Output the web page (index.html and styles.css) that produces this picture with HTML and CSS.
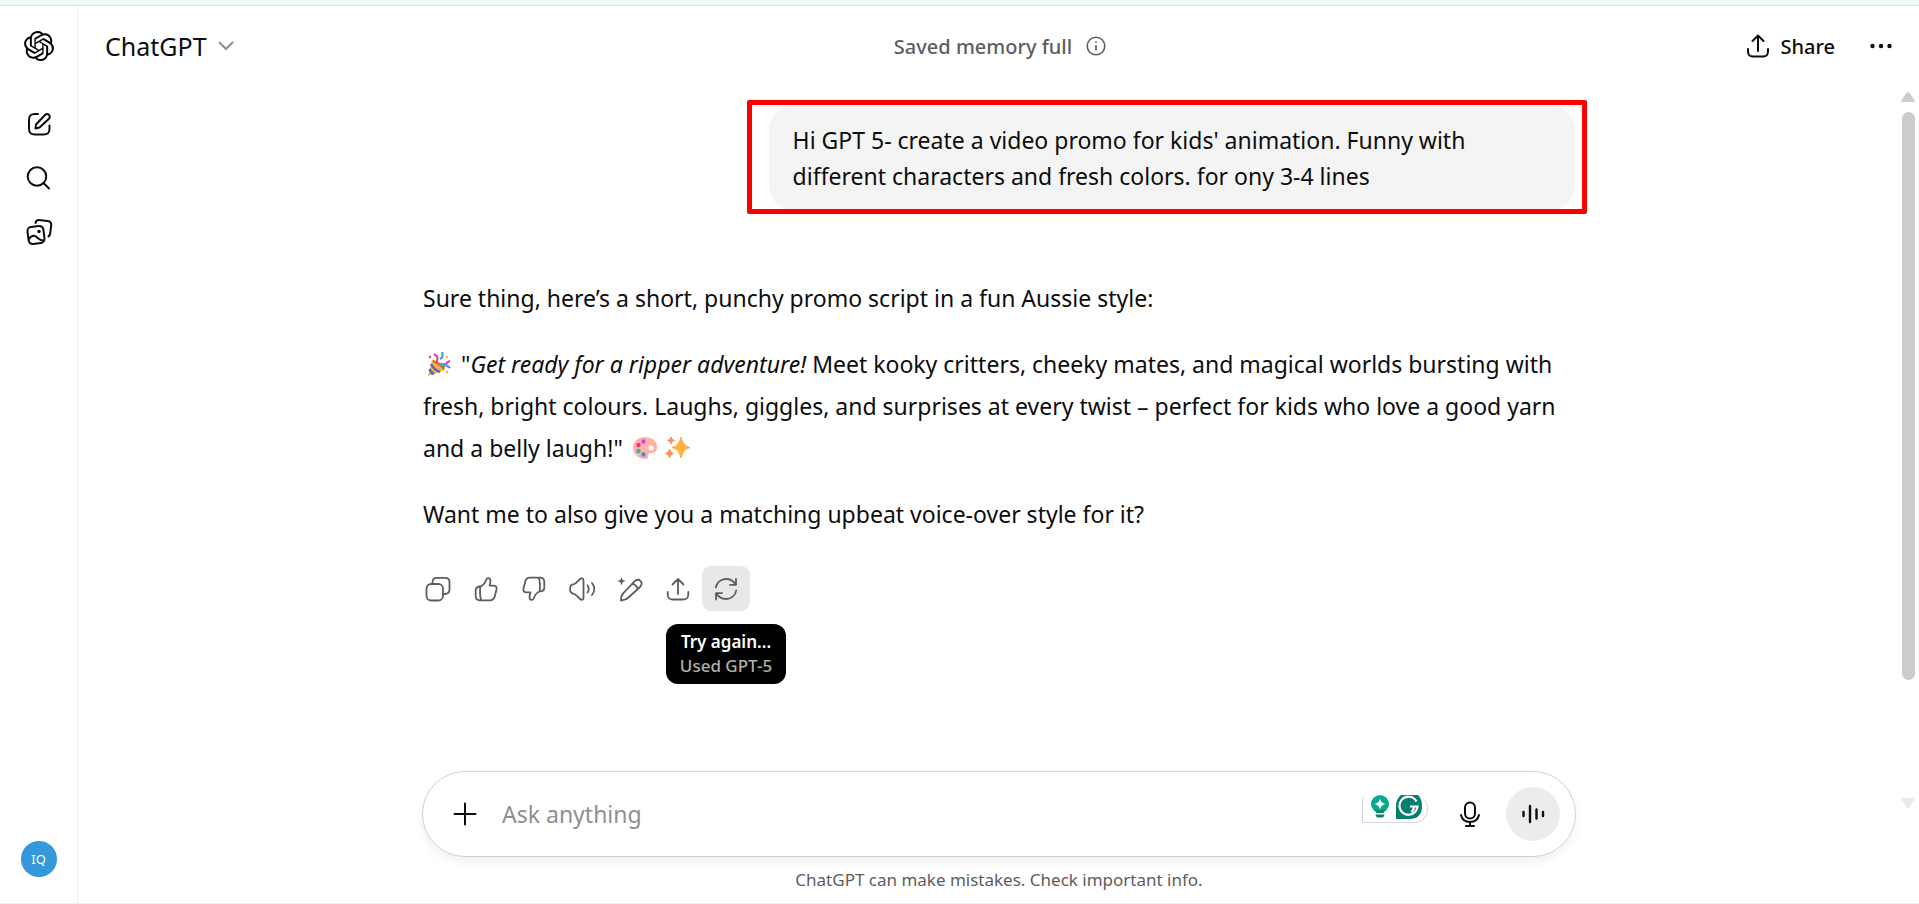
FILE: index.html
```html
<!DOCTYPE html>
<html lang="en">
<head>
    <meta charset="UTF-8">
    <title>ChatGPT</title>
    <link rel="stylesheet" href="styles.css">
</head>
<body>
<div class="strip"></div>
<div class="app">
    <nav class="sidebar">
        <a class="logo" href="#" aria-label="Home">
            <svg viewBox="0 0 24 24"><path d="M22.2819 9.8211a5.9847 5.9847 0 0 0-.5157-4.9108 6.0462 6.0462 0 0 0-6.5098-2.9A6.0651 6.0651 0 0 0 4.9807 4.1818a5.9847 5.9847 0 0 0-3.9977 2.9 6.0462 6.0462 0 0 0 .7427 7.0966 5.98 5.98 0 0 0 .511 4.9107 6.051 6.051 0 0 0 6.5146 2.9001A5.9847 5.9847 0 0 0 13.2599 24a6.0557 6.0557 0 0 0 5.7718-4.2058 5.9894 5.9894 0 0 0 3.9977-2.9001 6.0557 6.0557 0 0 0-.7475-7.0729zm-9.022 12.6081a4.4755 4.4755 0 0 1-2.8764-1.0408l.1419-.0804 4.7783-2.7582a.7948.7948 0 0 0 .3927-.6813v-6.7369l2.02 1.1686a.071.071 0 0 1 .038.052v5.5826a4.504 4.504 0 0 1-4.4945 4.4944zm-9.6607-4.1254a4.4708 4.4708 0 0 1-.5346-3.0137l.142.0852 4.783 2.7582a.7712.7712 0 0 0 .7806 0l5.8428-3.3685v2.3324a.0804.0804 0 0 1-.0332.0615L9.74 19.9502a4.4992 4.4992 0 0 1-6.1408-1.6464zM2.3408 7.8956a4.485 4.485 0 0 1 2.3655-1.9728V11.6a.7664.7664 0 0 0 .3879.6765l5.8144 3.3543-2.0201 1.1685a.0757.0757 0 0 1-.071 0l-4.8303-2.7865A4.504 4.504 0 0 1 2.3408 7.872zm16.5963 3.8558L13.1038 8.364 15.1192 7.2a.0757.0757 0 0 1 .071 0l4.8303 2.7913a4.4944 4.4944 0 0 1-.6765 8.1042v-5.6772a.79.79 0 0 0-.407-.667zm2.0107-3.0231l-.142-.0852-4.7735-2.7818a.7759.7759 0 0 0-.7854 0L9.409 9.2297V6.8974a.0662.0662 0 0 1 .0284-.0615l4.8303-2.7866a4.4992 4.4992 0 0 1 6.6802 4.66zM8.3065 12.863l-2.02-1.1638a.0804.0804 0 0 1-.038-.0567V6.0742a4.4992 4.4992 0 0 1 7.3757-3.4537l-.142.0805L8.704 5.459a.7948.7948 0 0 0-.3927.6813zm1.0976-2.3654l2.602-1.4998 2.6069 1.4998v2.9994l-2.5974 1.4997-2.6067-1.4997Z"/></svg>
        </a>
        <div class="side-links">
            <a href="#" aria-label="New chat">
                <svg class="icon bold" viewBox="0 0 28 28"><path d="M13 4H10C5.500 4 4 5.500 4 10V18.500C4 23 5.500 24.500 10 24.500H18.500C23 24.500 24.500 23 24.500 18.500V15.500"/><path d="M10.500 18.500L11 14.500L20 5A2.700 2.700 0 0 1 24 8.700L14.500 17.500Z"/></svg>
            </a>
            <a href="#" aria-label="Search chats">
                <svg class="icon bold" viewBox="0 0 28 28"><circle cx="12" cy="12.500" r="9.300"/><path d="M18.500 19L24 24.500"/></svg>
            </a>
            <a href="#" aria-label="Library">
                <svg class="icon bold" viewBox="0 0 28 28"><path d="M10.500 5C11 2.500 12 2 14 2.100L22.500 3C25.500 3.300 26.500 4.500 26.200 7.500L25.300 14.500C25 17 24.500 18 23.500 18.500"/><rect x="3" y="8.500" width="16" height="17" rx="4" transform="rotate(-7 11 17)"/><path d="M4 21C6 18 8.500 17 11 18.500C13 20 14.500 22.500 18.500 22.500"/><circle class="fill" cx="14" cy="13.500" r="1.700"/></svg>
            </a>
        </div>
        <button class="avatar" type="button">IQ</button>
    </nav>
    <main class="main">
        <header class="header">
            <button class="model" type="button">ChatGPT
                <svg class="chevron" viewBox="0 0 18 10"><path d="M2 1L9 8L16 1"/></svg>
            </button>
            <div class="memory">Saved memory full
                <svg class="info" viewBox="0 0 20 20"><circle cx="10" cy="10" r="8.800"/><path d="M10 9V14.500M10 5.500V7"/></svg>
            </div>
            <div class="tools">
                <button class="share" type="button">
                    <svg class="icon bold" viewBox="0 0 28 28"><path d="M14 19V4M8.500 9L14 3.500L19.500 9M4 17V19C4 23 5 24.500 9 24.500H19C23 24.500 24 23 24 19V17"/></svg>
                    Share
                </button>
                <button class="more" type="button" aria-label="More">
                    <svg class="icon dots" viewBox="0 0 28 28"><circle cx="5.500" cy="14" r="2.200"/><circle cx="14" cy="14" r="2.200"/><circle cx="22.500" cy="14" r="2.200"/></svg>
                </button>
            </div>
        </header>
        <section class="thread">
            <div class="bubble">Hi GPT 5- create a video promo for kids' animation. Funny with different characters and fresh colors. for ony 3-4 lines</div>
            <article class="answer">
                <p>Sure thing, here’s a short, punchy promo script in a fun Aussie style:</p>
                <p>
                    <svg class="emoji" viewBox="0 0 32 28" role="img" aria-label="party popper"><path d="M9 10L5 26L22 20Q19 11 9 10Z" fill="#fcb13c"/><path d="M8 14Q11 20 17 22M6.500 19Q8 23 11 24" stroke="#4a6bd6" stroke-width="2.500" fill="none"/><path d="M10 11Q16 13 21 19" stroke="#c77a16" stroke-width="2" fill="none"/><path d="M11 4Q17 7 13 13M20 18Q22 13 27 11" stroke="#f0319a" stroke-width="2" fill="none"/><path d="M19 2Q21 7 17 9M16 14Q22 13 27 18" stroke="#31a5ea" stroke-width="2.200" fill="none"/><circle cx="7" cy="7" r="1.200" fill="#f0319a"/><circle cx="24" cy="7" r="1.200" fill="#fcb13c"/><circle cx="24" cy="22" r="1.200" fill="#fcb13c"/></svg>
                    "<em>Get ready for a ripper adventure!</em> Meet kooky critters, cheeky mates, and magical worlds bursting with fresh, bright colours. Laughs, giggles, and surprises at every twist – perfect for kids who love a good yarn and a belly laugh!"
                    <svg class="emoji" viewBox="0 0 32 28" role="img" aria-label="palette"><path d="M16 3C23 3 28 7 28 13C28 19 24 19 21 19C18 19 21 25 17 25C9 25 4 20 4 14C4 7 9 3 16 3ZM22 11.500A2.500 2.500 0 1 0 22 16.500A2.500 2.500 0 1 0 22 11.500Z" fill="#ffb3a7" fill-rule="evenodd"/><circle cx="14.500" cy="7.500" r="2.200" fill="#b254e8"/><circle cx="9.500" cy="11" r="2.200" fill="#ef2f86"/><circle cx="9.500" cy="17" r="2.200" fill="#27b7b0"/><circle cx="14.500" cy="20.500" r="2.200" fill="#3c8cf0"/></svg><svg class="emoji" viewBox="0 0 32 28" role="img" aria-label="sparkles"><path d="M20 3Q22 12 29 13.500Q22 15 20 24Q18 15 11 13.500Q18 12 20 3Z" fill="#ffb13f" stroke="#ffb13f" stroke-linejoin="round"/><path d="M10 3Q10.500 6 13.500 6.500Q10.500 7 10 10Q9.500 7 6.500 6.500Q9.500 6 10 3ZM8.500 15Q9 19 12.500 19.500Q9 20 8.500 24Q8 20 4.500 19.500Q8 19 8.500 15Z" fill="#ff9057" stroke="#ff9057"/></svg>
                </p>
                <p>Want me to also give you a matching upbeat voice-over style for it?</p>
            </article>
            <div class="actions">
                <button type="button" aria-label="Copy">
                    <svg class="icon" viewBox="0 0 28 28"><rect x="2.500" y="9" width="16.500" height="16.500" rx="4.500"/><path d="M8.500 9V7.500C8.500 4 10 2.800 13 2.800H21C24.500 2.800 25.500 4 25.500 7V14.500C25.500 18 24 19 20.500 19H19"/></svg>
                </button>
                <button type="button" aria-label="Good response">
                    <svg class="icon" viewBox="0 0 28 28"><path d="M8.500 11.500C11.500 10.500 13 8 14.200 4.800C15.200 2 18.500 2.800 18.500 5.500C18.500 7.500 17.800 9 17.600 10.700H21.500C24.300 10.700 25 12.500 24.500 14.500L22.700 21.500C22 24.500 20.500 25.300 18 25.300H8C5 25.300 3.700 24 3.700 21V15.500C3.700 12.500 5 11.500 8.500 11.500C7.800 14 7.700 22 9.300 25.300"/></svg>
                </button>
                <button type="button" aria-label="Bad response">
                    <svg class="icon" viewBox="0 0 28 28"><path transform="rotate(180 14 14)" d="M8.500 11.500C11.500 10.500 13 8 14.200 4.800C15.200 2 18.500 2.800 18.500 5.500C18.500 7.500 17.800 9 17.600 10.700H21.500C24.300 10.700 25 12.500 24.500 14.500L22.700 21.500C22 24.500 20.500 25.300 18 25.300H8C5 25.300 3.700 24 3.700 21V15.500C3.700 12.500 5 11.500 8.500 11.500C7.800 14 7.700 22 9.300 25.300"/></svg>
                </button>
                <button type="button" aria-label="Read aloud">
                    <svg class="icon" viewBox="0 0 28 28"><path d="M6 9.200C7.500 9 9 7 11.500 4.500C13.500 2.500 15.500 3 15.500 5.500V22.500C15.500 25 13.500 25.500 11.500 23.500C9 21 7.500 19 6 18.800C3 18.500 2 17 2 14S3 9.500 6 9.200ZM19.500 10.500C21 12.500 21 15.500 19.500 17.500M24 8C27 11.500 27 16.500 24 20"/></svg>
                </button>
                <button type="button" aria-label="Edit in canvas">
                    <svg class="icon" viewBox="0 0 28 28"><path d="M5 25.500C5 22 5 20.500 7.500 18L18.500 6.300C23 2 28 7.500 24 12L12.500 22.500C10 25 8.500 25 5 25.500ZM16.500 8.500C19 9.500 21 11.500 22 14"/><path class="fill" d="M5.500 2L6.700 4.900L9.600 6.100L6.700 7.300L5.500 10.200L4.300 7.300L1.400 6.100L4.300 4.900Z"/></svg>
                </button>
                <button type="button" aria-label="Share">
                    <svg class="icon" viewBox="0 0 28 28"><path d="M14 19V4M8.500 9.500L14 4L19.500 9.500M3.700 17V19C3.700 23 5 24.500 9 24.500H19C23 24.500 24.300 23 24.300 19V17"/></svg>
                </button>
                <div class="retry">
                    <button class="active" type="button" aria-label="Try again">
                        <svg class="icon" viewBox="0 0 28 28"><path d="M3.800 12.500C4.500 7.500 9 4 14 4C18 4 21.500 6 23.500 9.500M24 4V9.800H18M24.200 15.500C23.500 20.500 19 24 14 24C10 24 6.500 22 4.500 18.500M4 24.500V18.200H10"/></svg>
                    </button>
                    <div class="tooltip" role="tooltip"><b>Try again...</b><span>Used GPT-5</span></div>
                </div>
            </div>
        </section>
        <form class="composer">
            <button class="plus" type="button" aria-label="Add files">
                <svg class="icon bold" viewBox="0 0 28 28"><path d="M14 3.500V24.500M3.500 14H24.500"/></svg>
            </button>
            <input type="text" placeholder="Ask anything" aria-label="Ask anything">
            <div class="grammar">
                <svg viewBox="0 0 18 24"><circle cx="9" cy="9" r="9" fill="#0aa98f"/><path d="M4 15H14L12.500 18H5.500ZM4.500 19.500H13.500Q13 22.500 11 22.500H7Q5 22.500 4.500 19.500Z" fill="#08846f"/><path d="M9 3.500Q9.800 8.200 14.500 9Q9.800 9.800 9 14.500Q8.200 9.800 3.500 9Q8.200 8.200 9 3.500Z" fill="#fff"/></svg>
                <svg viewBox="0 0 26 24"><path d="M0 24V11Q0 4 5 0H22Q26 4 26 11Q26 24 13 24Z" fill="#047e6e"/><path d="M20.500 6.500A9 9 0 1 0 21.500 11.500H14M18 11.500Q18 15 15.500 17" fill="none" stroke="#fff" stroke-width="2.200"/></svg>
            </div>
            <button class="mic" type="button" aria-label="Dictate">
                <svg class="icon bold" viewBox="0 0 28 28"><rect x="9" y="2.500" width="10" height="16" rx="5"/><path d="M5 15C6 19.500 9.500 22 14 22S22 19.500 23 15M14 22V26M10 26H18"/></svg>
            </button>
            <button class="voice" type="button" aria-label="Voice mode">
                <svg class="icon thick" viewBox="0 0 28 28"><path d="M4.500 12V16M11 6V22M17.500 9.500V18.500M24 12V16"/></svg>
            </button>
        </form>
        <p class="note">ChatGPT can make mistakes. Check important info.</p>
        <div class="scrollbar">
            <svg viewBox="0 0 14 10"><path d="M7 0Q8 0 9 1.500L13.500 8Q14.500 10 12.500 10H1.500Q-.5 10 .5 8L5 1.500Q6 0 7 0Z"/></svg>
            <div class="track"><div class="thumb"></div></div>
            <svg class="down" viewBox="0 0 14 10"><path d="M7 10Q6 10 5 8.500L.5 2Q-.5 0 1.500 0H12.500Q14.500 0 13.500 2L9 8.500Q8 10 7 10Z"/></svg>
        </div>
    </main>
</div>
</body>
</html>
```
FILE: styles.css
```css
*{
    margin:0;
    padding:0;
    box-sizing:border-box;
}
body{
    display:flex;
    flex-direction:column;
    min-height:100vh;
    font-family:"Noto Sans", "Segoe UI", sans-serif;
    font-size:23px;
    color:#0d0d0d;
    background:#fff;
    border-bottom:1px solid #eceef2;
}
button,input{
    font:inherit;
    color:inherit;
    border:0;
    background:none;
}
button{
    display:flex;
    align-items:center;
    justify-content:center;
    cursor:pointer;
}
a{
    color:inherit;
}
svg{
    display:block;
    flex:none;
}
.icon{
    width:28px;
    height:28px;
    fill:none;
    stroke:currentColor;
    stroke-width:1.8;
    stroke-linecap:round;
    stroke-linejoin:round;
}
.icon.bold{
    stroke-width:2;
}
.icon.thick{
    stroke-width:2.4;
}
.icon .fill,.icon.dots{
    fill:currentColor;
    stroke:none;
}
.strip{
    height:6px;
    background:#f4faf8;
    border-bottom:1px solid #d6e2df;
}
.app{
    display:flex;
    flex:1;
}

/* sidebar */
.sidebar{
    display:flex;
    flex-direction:column;
    align-items:center;
    width:78px;
    padding:25px 0 26px;
    border-right:1px solid #efefef;
}
.logo svg{
    width:30px;
    height:30px;
}
.side-links{
    display:flex;
    flex-direction:column;
    gap:26px;
    margin-top:49px;
}
.avatar{
    width:36px;
    height:36px;
    margin-top:auto;
    border-radius:50%;
    background:#3498db;
    color:#fff;
    font-size:13px;
}

/* header */
.main{
    position:relative;
    display:flex;
    flex-direction:column;
    flex:1;
    padding-left:1px;
}
.header{
    display:grid;
    grid-template-columns:1fr auto 1fr;
    align-items:center;
    height:80px;
    padding:0 24px 0 26px;
}
.model{
    justify-self:start;
    gap:10px;
    font-size:25px;
}
.chevron{
    width:18px;
    height:10px;
    fill:none;
    stroke:#8f8f8f;
    stroke-width:2;
}
.memory{
    display:flex;
    align-items:center;
    gap:14px;
    color:#5d5d5d;
    font-size:20px;
    font-weight:500;
}
.info{
    width:20px;
    height:20px;
    fill:none;
    stroke:currentColor;
    stroke-width:1.6;
}
.tools{
    display:flex;
    justify-self:end;
    gap:32px;
}
.share{
    gap:8px;
    font-size:20px;
    font-weight:500;
}

/* conversation */
.thread{
    width:100%;
    max-width:1152px;
    margin:18px auto 0;
}
.bubble{
    position:relative;
    width:70%;
    margin-left:auto;
    padding:18px 24px;
    border-radius:27px;
    background:#f4f4f4;
    line-height:36px;
}
.bubble:after{
    content:"";
    position:absolute;
    top:-4px;
    right:-12px;
    bottom:-2px;
    left:-22px;
    border:5px solid #f00;
    border-radius:2px;
}
.answer{
    margin-top:65px;
    line-height:42px;
}
.answer p + p{
    margin-top:24px;
}
.emoji{
    display:inline-block;
    width:32px;
    height:28px;
    vertical-align:-5px;
}
.actions{
    display:flex;
    margin:31px 0 0 -9px;
    color:#5d5d5d;
}
.actions button{
    width:48px;
    height:45px;
    border-radius:9px;
}
.actions .active{
    background:#e8e8e8;
}
.retry{
    position:relative;
}
.tooltip{
    position:absolute;
    top:58px;
    left:-36px;
    display:flex;
    flex-direction:column;
    width:120px;
    padding:6px 0;
    border-radius:12px;
    background:#000;
    color:#fff;
    font-size:17px;
    line-height:24px;
    text-align:center;
}
.tooltip b{
    font-weight:600;
}
.tooltip span{
    color:#afafaf;
    font-weight:500;
}

/* composer */
.composer{
    display:flex;
    align-items:center;
    width:100%;
    max-width:1154px;
    height:86px;
    margin:auto auto 0;
    padding:0 15px 0 28px;
    border:1px solid #d0d0d0;
    border-radius:43px;
    box-shadow:0 5px 10px rgba(0,0,0,.06);
}
.composer input{
    flex:1;
    min-width:0;
    margin-left:23px;
    outline:0;
}
.composer input::placeholder{
    color:#8f8f8f;
    opacity:1;
}
.grammar{
    display:flex;
    gap:7px;
    align-self:flex-start;
    width:66px;
    height:28px;
    margin:23px 28px 0 0;
    padding:0 5px 0 8px;
    border:1px solid #d5d7e6;
    border-top:0;
    border-radius:10px 28px 28px 2px;
}
.grammar svg{
    height:24px;
}
.voice{
    width:54px;
    height:54px;
    margin-left:22px;
    border-radius:50%;
    background:#ececec;
}
.note{
    height:46px;
    color:#5d5d5d;
    font-size:17px;
    line-height:46px;
    text-align:center;
}

/* scrollbar */
.scrollbar{
    position:absolute;
    top:86px;
    right:4px;
    bottom:95px;
    display:flex;
    flex-direction:column;
    align-items:center;
    gap:10px;
    width:14px;
}
.scrollbar svg{
    width:14px;
    height:10px;
    fill:#ccc;
}
.scrollbar .down{
    opacity:.4;
}
.track{
    flex:1;
    width:13px;
}
.thumb{
    height:84%;
    border-radius:7px;
    background:#ccc;
}
```
